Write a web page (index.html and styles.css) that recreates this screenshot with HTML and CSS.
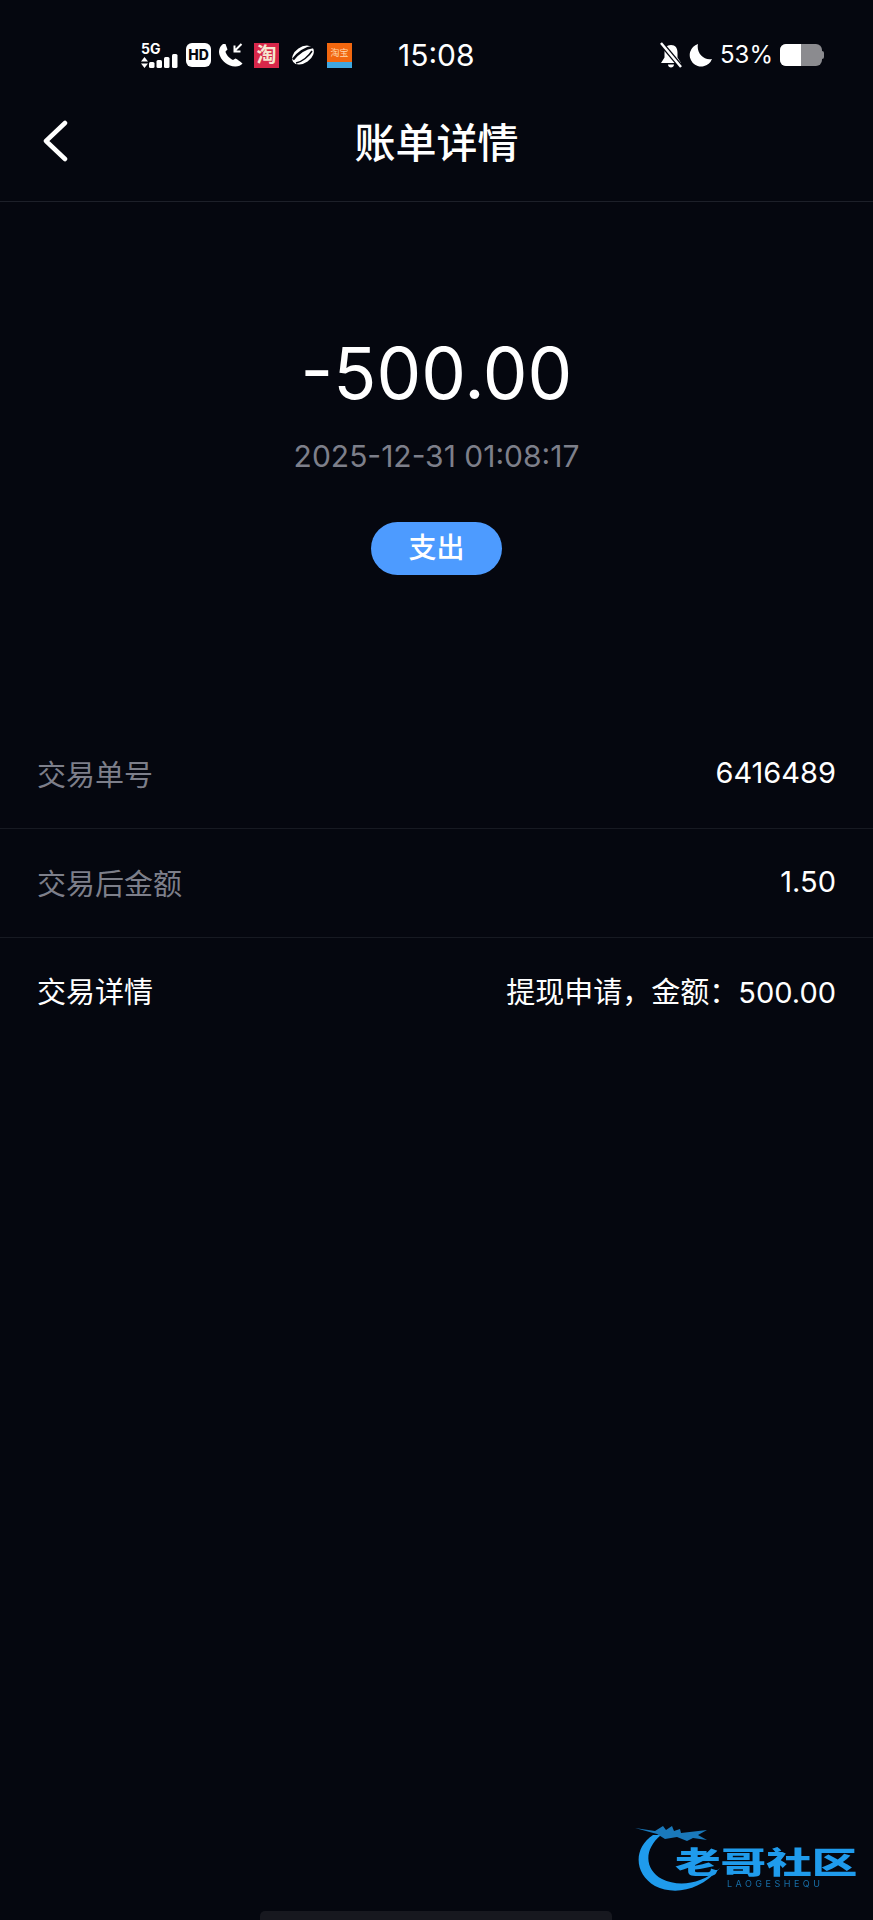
FILE: index.html
```html
<!DOCTYPE html>
<html lang="zh">
<head>
<meta charset="utf-8">
<title>账单详情</title>
<link rel="stylesheet" href="styles.css">
</head>
<body>
<div class="page">
  <header class="status">
    <div class="status-left">
      <div class="net">
        <span class="net-label">5G</span>
        <div class="net-row">
          <svg width="7" height="11" viewBox="0 0 7 11"><path d="M3.500 0L7 4.500H0zM0 6.500h7L3.500 11z" fill="#fff"/></svg>
          <svg width="29" height="14" viewBox="0 0 29 14"><rect x="0" y="8" width="5.500" height="6" rx="1.500" fill="#fff"/><rect x="7.500" y="6" width="5.500" height="8" rx="1.500" fill="#fff"/><rect x="15" y="3" width="5.500" height="11" rx="1.500" fill="#fff"/><rect x="23" y="0" width="5.500" height="14" rx="1.500" fill="#fff"/></svg>
        </div>
      </div>
      <span class="hd">HD</span>
      <svg class="call" width="25" height="24" viewBox="0 0 25 24"><path d="M5 1C1 4 0 9 2 13c2.500 6 8 10 15 10.500 3 .2 6-1 7.500-3-3-2.500-5-4-7-5l-2.500 1.500C11 15 8 11.500 7.500 8.500L9.500 6.500 7.500 1z" fill="#fff"/><path d="M23.500 1L16.500 8M16.500 2.500V8.500h6" fill="none" stroke="#fff" stroke-width="2"/></svg>
      <span class="app app-tao">淘</span>
      <svg class="app-swirl" width="24" height="24" viewBox="0 0 24 24"><ellipse cx="12" cy="12" rx="12" ry="8" transform="rotate(-35 12 12)" fill="#fff"/><path d="M2 16.500C8 9 14 5 22 4" fill="none" stroke="#05070f" stroke-width="2.500"/><path d="M5 20C11 19 18 13 21 8" fill="none" stroke="#05070f" stroke-width="1.500"/></svg>
      <span class="app app-sale"><span class="sale-top">淘宝</span><span class="sale-bottom"></span></span>
      <span class="time">15:08</span>
    </div>
    <div class="status-right">
      <svg width="22" height="27" viewBox="0 0 22 27"><path d="M11 3c4.500 0 6.500 3 6.500 7.500v5L21 21H1l3.500-5.500v-5C4.500 6 6.500 3 11 3zM8 22.500h6c0 4-6 4-6 0z" fill="#fff"/><path d="M1 1l20 24" stroke="#05070f" stroke-width="5"/><path d="M1 1l20 24" stroke="#fff" stroke-width="2.500"/></svg>
      <svg class="moon" width="25" height="25" viewBox="0 0 25 25"><path d="M10 1a11.500 11.500 0 1 0 14 15C16 18 8 10 10 1z" fill="#fff"/></svg>
      <span class="pct">53%</span>
      <span class="battery"><span class="battery-level"></span></span><span class="battery-cap"></span>
    </div>
  </header>

  <nav class="nav">
    <svg class="back" width="26" height="44" viewBox="0 0 26 44"><path d="M23 4L4 22l19 18" fill="none" stroke="#fff" stroke-width="4.500" stroke-linecap="round" stroke-linejoin="round"/></svg>
    <h1 class="title">账单详情</h1>
  </nav>

  <section class="hero">
    <div class="amount">-500.00</div>
    <div class="date">2025-12-31 01:08:17</div>
    <div class="tag">支出</div>
  </section>

  <section class="rows">
    <div class="row"><span class="label">交易单号</span><span class="value">6416489</span></div>
    <div class="row"><span class="label">交易后金额</span><span class="value">1.50</span></div>
    <div class="row row-last"><span class="label label-light">交易详情</span><span class="value">提现申请，金额：500.00</span></div>
  </section>

  <div class="home-bar"></div>

  <div class="mark">
    <svg class="dragon" width="90" height="76" viewBox="0 0 90 76"><path d="M18 15C-2 28-1 54 20 66c18 9 44 6 65-18-20 17-42 19-58 11C10 50 8 30 26 15z" fill="#1f9bec"/><path d="M0 8l20 3 8-5 3 4 6-4 2 5 6-2 1 4 26-3-9 5 9 5-14-2-6 3-10-4-12 2-8-5z" fill="#1a79bb"/></svg>
    <span class="mark-cn">老哥社区</span>
    <span class="mark-en">LAOGESHEQU</span>
  </div>
</div>
</body>
</html>
```

FILE: styles.css
```css
* { box-sizing: border-box; }
html, body { margin: 0; padding: 0; }
body {
  background: #05070f;
  color: #fff;
  font-family: Inter, "Noto Sans CJK SC", sans-serif;
}
.page {
  position: relative;
  width: 873px;
  height: 1920px;
  display: flex;
  flex-direction: column;
  overflow: hidden;
}
.status {
  height: 100px;
  padding: 10px 49px 0 141px;
  display: flex;
  align-items: center;
  justify-content: space-between;
}
.status-left, .status-right { display: flex; align-items: center; }
.net { display: flex; flex-direction: column; align-items: flex-start; width: 36px; height: 25px; }
.net-label { font-size: 14px; font-weight: 700; line-height: 12px; }
.net-row { display: flex; align-items: flex-end; gap: 1px; height: 13px; }
.net-row svg { display: block; }
.hd {
  margin-left: 9px;
  width: 25px; height: 24px;
  background: #fff;
  color: #05070f;
  border-radius: 6px;
  font-size: 14px;
  font-weight: 800;
  line-height: 24px;
  text-align: center;
}
.call { margin-left: 7px; }
.app {
  width: 25px; height: 25px;
  display: block;
  overflow: hidden;
}
.app-tao {
  margin-left: 11px;
  background: #d8274a;
  font-size: 20px;
  line-height: 24px;
  text-align: center;
  font-weight: 700;
  color: #f6e6d0;
}
.app-swirl { margin-left: 12px; }
.app-sale {
  margin-left: 12px;
  background: #f2670f;
  display: flex;
  flex-direction: column;
}
.sale-top { height: 19px; font-size: 9px; line-height: 19px; text-align: center; color: #ffd9b0; }
.sale-bottom { height: 6px; background: #3fa7e0; }
.time { margin-left: 46px; font-size: 30px; line-height: 34px; font-weight: 400; width: 76px; }
.status-right svg { display: block; }
.moon { margin-left: 6px; }
.pct { margin-left: 7px; font-size: 24px; line-height: 30px; }
.battery {
  margin-left: 7px;
  width: 42px; height: 22px;
  background: #8b8b8f;
  border-radius: 6px;
  overflow: hidden;
  display: block;
}
.battery-level { display: block; width: 21px; height: 22px; background: #fff; }
.battery-cap { width: 2px; height: 8px; background: #8b8b8f; border-radius: 0 2px 2px 0; }

.nav {
  height: 102px;
  padding-bottom: 16px;
  border-bottom: 1px solid #1d2029;
  position: relative;
  display: flex;
  align-items: center;
  justify-content: center;
}
.back { position: absolute; left: 42px; top: 19px; }
.title { margin: 0; font-size: 41px; line-height: 52px; font-weight: 500; }

.hero {
  padding-top: 127px;
  display: flex;
  flex-direction: column;
  align-items: center;
}
.amount { font-size: 71px; line-height: 88px; font-weight: 400; }
.date { margin-top: 21px; font-size: 30px; line-height: 36px; color: #7d7f8a; }
.tag {
  margin-top: 48px;
  width: 131px; height: 53px;
  border-radius: 27px;
  background: #4d9bff;
  font-size: 28px;
  line-height: 53px;
  text-align: center;
  font-weight: 500;
}
.rows { margin-top: 145px; }
.row {
  height: 109px;
  padding: 0 37px 3px;
  display: flex;
  align-items: center;
  justify-content: space-between;
  border-bottom: 1px solid #171a22;
  font-size: 29px;
}
.row-last { border-bottom: 0; padding-bottom: 5px; }
.label { color: #7d7f8a; }
.label-light { color: #fff; }
.home-bar {
  margin: auto 0 0 260px;
  width: 352px; height: 9px;
  border-radius: 5px 5px 0 0;
  background: #17181f;
}
.mark {
  position: absolute;
  left: 635px; top: 1820px;
  width: 225px; height: 76px;
  filter: blur(0.4px);
}
.dragon { position: absolute; left: 0; top: 0; }
.mark-cn {
  position: absolute;
  left: 40px; top: 26px;
  font-size: 30px;
  line-height: 32px;
  font-weight: 900;
  color: #1f9bec;
  white-space: nowrap;
  transform: scaleX(1.52);
  transform-origin: left center;
}
.mark-en {
  position: absolute;
  left: 92px; top: 59px;
  font-size: 9px;
  line-height: 10px;
  color: #176ea8;
  letter-spacing: 3.500px;
  white-space: nowrap;
}
```
